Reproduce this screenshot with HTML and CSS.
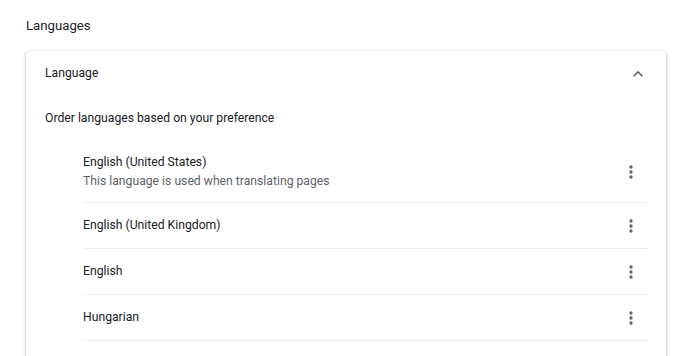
FILE: index.html
```html
<!DOCTYPE html>
<html lang="en">
<head>
    <meta http-equiv="Content-Type" content="text/html; charset=utf-8" />
    <link rel="stylesheet" href="styles.css">
    <title>Languages</title>
</head>
<body>
<div class="page">
    <h2 class="section-title">Languages</h2>
    <div class="card">
        <div class="card-head">
            <span>Language</span>
            <svg class="icon" viewBox="0 0 24 24"><path d="M12 8l-6 6 1.41 1.41L12 10.83l4.59 4.58L18 14z"/></svg>
        </div>
        <div class="card-desc">Order languages based on your preference</div>
        <ul class="lang-list">
            <li class="lang-item lang-item-2">
                <div class="lang-text">
                    <div>English (United States)</div>
                    <div class="secondary">This language is used when translating pages</div>
                </div>
                <svg class="icon" viewBox="0 0 24 24"><circle cx="12" cy="6" r="2"/><circle cx="12" cy="12" r="2"/><circle cx="12" cy="18" r="2"/></svg>
            </li>
            <li class="lang-item">
                <div class="lang-text">English (United Kingdom)</div>
                <svg class="icon" viewBox="0 0 24 24"><circle cx="12" cy="6" r="2"/><circle cx="12" cy="12" r="2"/><circle cx="12" cy="18" r="2"/></svg>
            </li>
            <li class="lang-item">
                <div class="lang-text">English</div>
                <svg class="icon" viewBox="0 0 24 24"><circle cx="12" cy="6" r="2"/><circle cx="12" cy="12" r="2"/><circle cx="12" cy="18" r="2"/></svg>
            </li>
            <li class="lang-item">
                <div class="lang-text">Hungarian</div>
                <svg class="icon" viewBox="0 0 24 24"><circle cx="12" cy="6" r="2"/><circle cx="12" cy="12" r="2"/><circle cx="12" cy="18" r="2"/></svg>
            </li>
        </ul>
    </div>
</div>
</body>
</html>
```

FILE: styles.css
```css
*{margin:0;padding:0;box-sizing:border-box;}
ul{list-style-type:none;}
body{font:400 12.2px/19px Roboto, "Liberation Sans", Arial, sans-serif;color:#202124;background:#fff;}
.page{padding:16px 24px 0 26px;}
.section-title{font:400 13.2px/20px Roboto, "Liberation Sans", Arial, sans-serif;margin-bottom:15px;}
.card{border-radius:4px;background:#fff;box-shadow:0 1px 2px rgba(60,64,67,.3),0 1px 3px 1px rgba(60,64,67,.15);padding:0 19px 20px 19px;}
.card-head{display:flex;align-items:center;justify-content:space-between;height:45px;}
.card-head .icon{margin-right:-1px;}
.card-desc{height:44px;display:flex;align-items:center;}
.lang-list{padding-left:38px;}
.lang-item{display:flex;align-items:center;justify-content:space-between;height:46px;border-bottom:1px solid #e8eaed;padding-right:6px;}
.lang-item-2{height:63px;padding-top:1px;}
.secondary{color:#5f6368;}
.icon{width:20px;height:20px;fill:#5f6368;flex:none;}
```
